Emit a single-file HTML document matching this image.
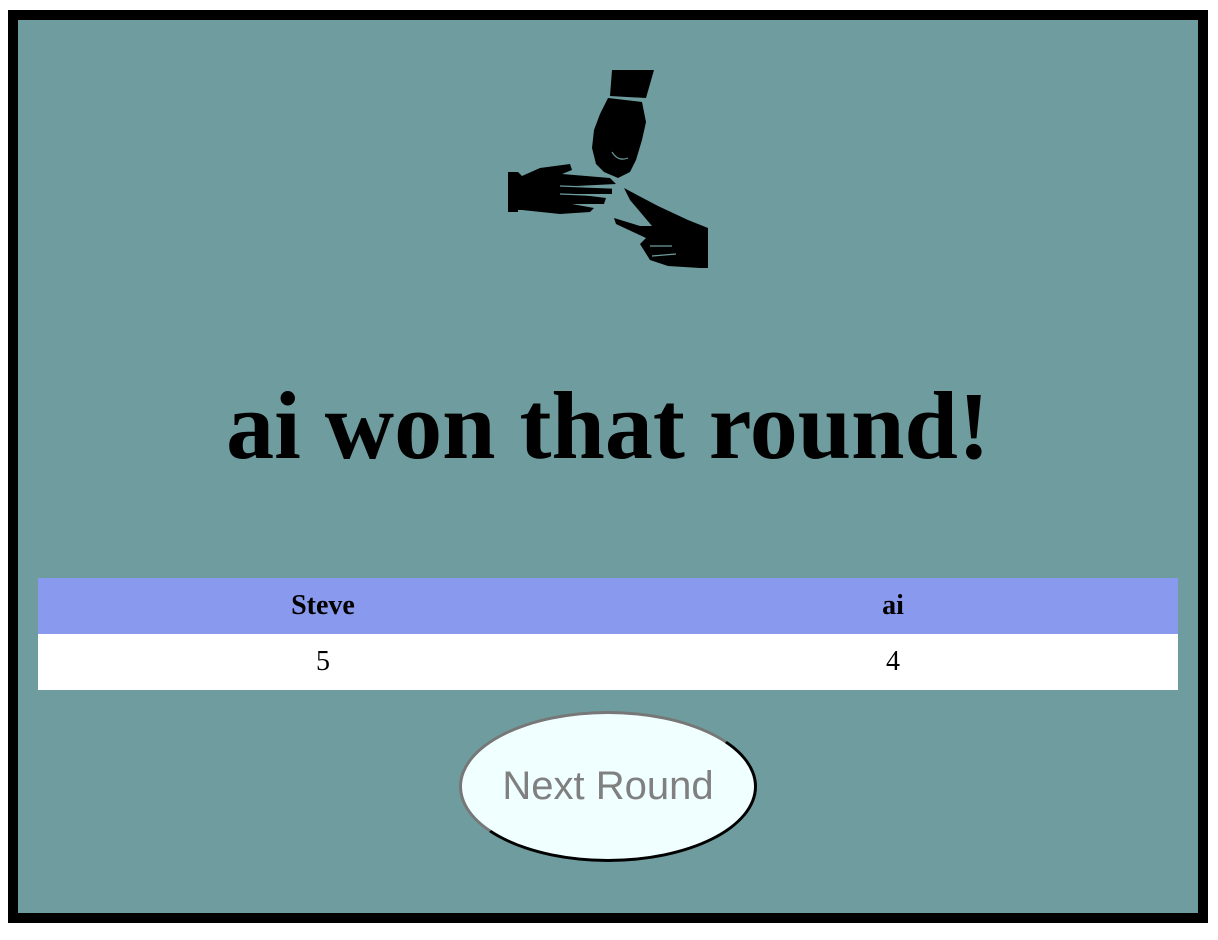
<!DOCTYPE html>
<html><head><style>
html,body{margin:0;padding:0;background:#fff;}
.box{position:absolute;left:8px;top:10px;width:1180px;height:893px;border:10px solid #000;background:#6f9c9e;}
h1{position:absolute;left:0;width:100%;top:350px;margin:0;text-align:center;font:bold 96px "Liberation Serif",serif;color:#000;}
table{position:absolute;left:20px;top:558px;width:1140px;border-collapse:collapse;font-family:"Liberation Serif",serif;font-size:28px;}
th{background:#8899ee;height:56px;padding:0;font-weight:bold;width:50%;}
td{background:#fff;height:56px;padding:0;text-align:center;}
.btn{position:absolute;left:441px;top:691px;width:292px;height:145px;border:3px outset #777;border-color:#777 #222 #222 #777;border-radius:50%;background:#f0ffff;color:#808080;font:40px "Liberation Sans",sans-serif;display:flex;align-items:center;justify-content:center;box-sizing:content-box;}
svg{position:absolute;left:482px;top:40px;}
</style></head><body>
<div class="box">
<svg width="220" height="220" viewBox="0 0 220 220">
<g fill="#000">
<path d="M112 10 L154 10 L146 38 L110 36 Z"/>
<path d="M108 38 L142 42 L146 62 L142 80 L136 100 L130 112 L118 118 L104 112 L96 104 L92 88 L94 70 L100 54 Z"/>
<path d="M8 112 L18 112 L22 116 L40 108 L70 104 L72 110 L62 114 L110 118 L116 124 L76 126 L112 128 L112 134 L74 134 L106 138 L104 144 L72 144 L94 148 L90 152 L60 154 L22 150 L18 150 L18 152 L8 152 Z"/>
<path d="M124 128 L158 146 L188 160 L208 168 L208 208 L200 208 L168 206 L150 200 L140 184 L146 178 L116 164 L114 158 L140 166 L152 166 L130 140 Z"/>
</g>
<g stroke="#6f9c9e" stroke-width="1.2" fill="none">
<path d="M110 37 L142 40"/><path d="M112 92 Q118 102 128 98"/><path d="M60 126 L112 128"/><path d="M60 134 L110 136"/><path d="M150 186 L172 186"/><path d="M152 196 L176 194"/>
</g>
</svg>
<h1>ai won that round!</h1>
<table><tr><th>Steve</th><th>ai</th></tr><tr><td>5</td><td>4</td></tr></table>
<div class="btn">Next Round</div>
</div>
</body></html>
